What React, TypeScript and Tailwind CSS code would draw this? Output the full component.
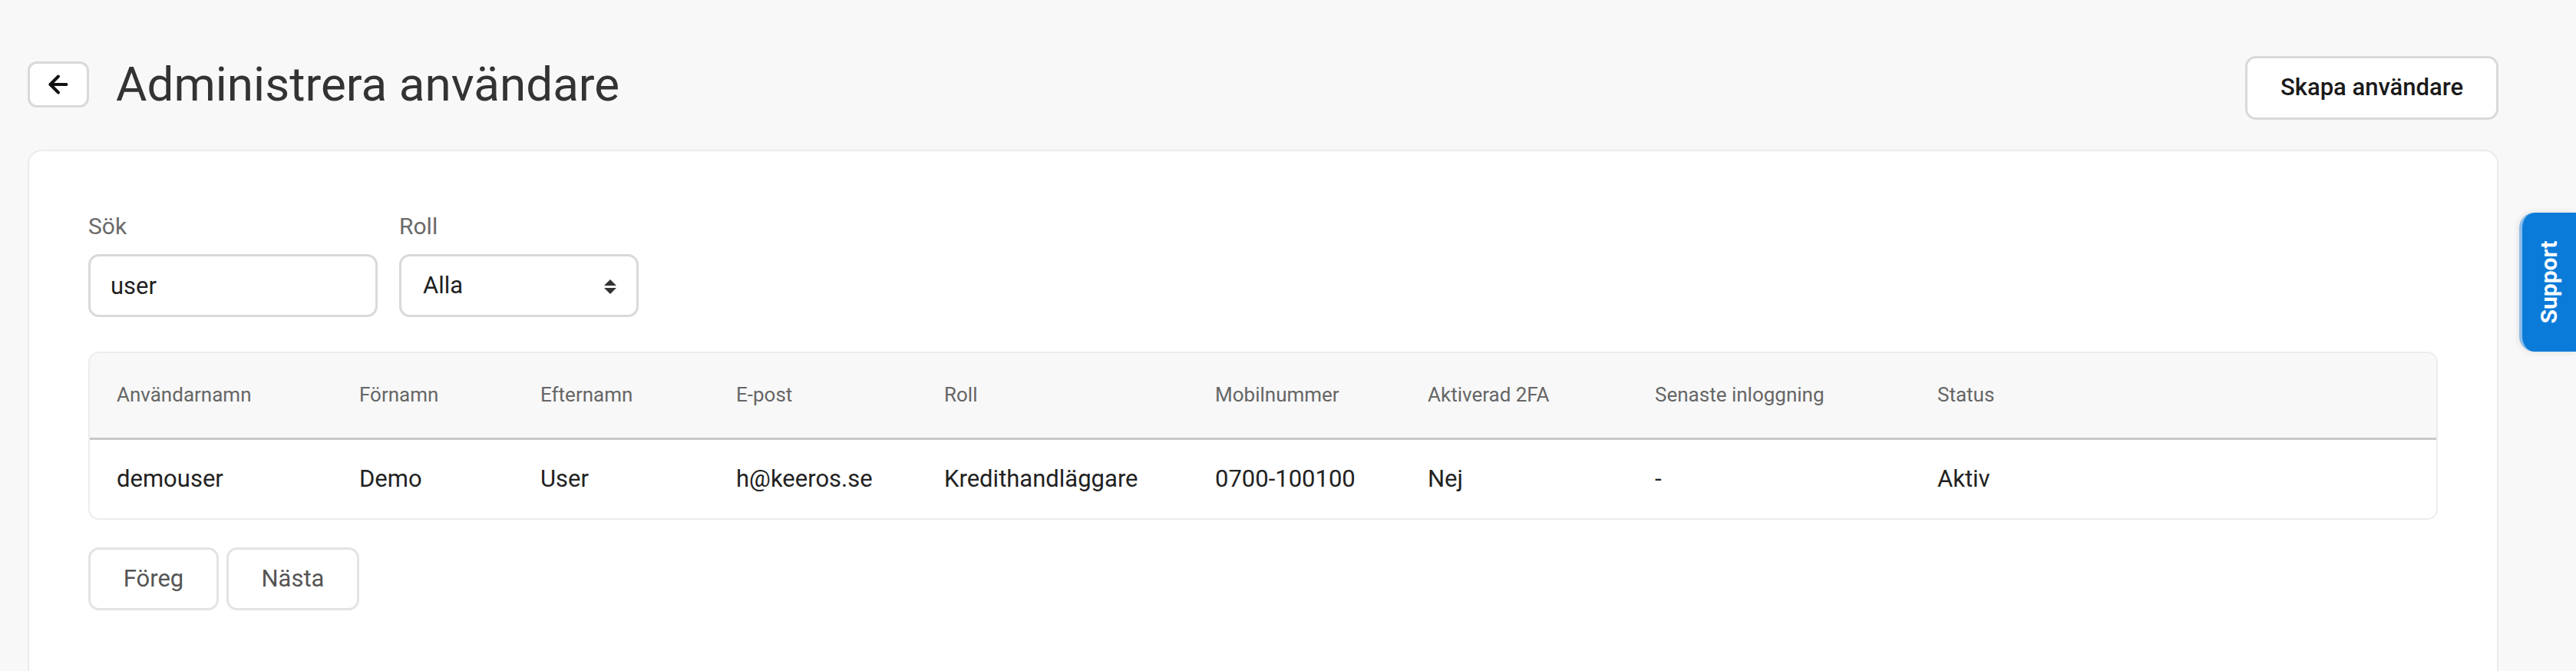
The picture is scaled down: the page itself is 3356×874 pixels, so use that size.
import React from "react";
import { ArrowLeft } from "lucide-react";

const cols = [
  { label: "Användarnamn", w: "w-[316px]" },
  { label: "Förnamn", w: "w-[236px]" },
  { label: "Efternamn", w: "w-[255px]" },
  { label: "E-post", w: "w-[271px]" },
  { label: "Roll", w: "w-[353px]" },
  { label: "Mobilnummer", w: "w-[277px]" },
  { label: "Aktiverad 2FA", w: "w-[296px]" },
  { label: "Senaste inloggning", w: "w-[368px]" },
  { label: "Status", w: "" },
];

const row = ["demouser", "Demo", "User", "h@keeros.se", "Kredithandläggare", "0700-100100", "Nej", "-", "Aktiv"];

export default function App() {
  return (
    <div className="relative min-h-screen overflow-hidden bg-[#f8f8f8] font-['Roboto',sans-serif]">
      <div className="pl-[36px] pr-[101px] pt-[73px]">
        <div className="mb-[39px] flex items-start justify-between">
          <div className="mt-[7px] flex items-center gap-[35px]">
            <button className="flex h-[60px] w-[80px] items-center justify-center rounded-[12px] border-[3px] border-[#d9d9d9] bg-white text-[#111]">
              <ArrowLeft size={36} strokeWidth={2.6} />
            </button>
            <h1 className="text-[62px] leading-[60px] font-normal text-[#333333]">Administrera användare</h1>
          </div>
          <button className="h-[83px] w-[330px] rounded-[14px] border-[3px] border-[#d9d9d9] bg-white text-[31px] font-medium text-[#1a1a1a]">
            Skapa användare
          </button>
        </div>

        <div className="rounded-[18px] border-2 border-[#ebebeb] bg-white px-[77px] pt-[78px] pb-[140px]">
          <div className="flex gap-[28px]">
            <div className="flex flex-col gap-[16px]">
              <label className="text-[30px] leading-[40px] text-[#6a6a6a]">Sök</label>
              <input
                defaultValue="user"
                className="h-[82px] w-[377px] rounded-[14px] border-[3px] border-[#d9d9d9] bg-white px-[26px] text-[31px] text-[#1f1f1f] outline-none"
              />
            </div>
            <div className="flex flex-col gap-[16px]">
              <label className="text-[30px] leading-[40px] text-[#6a6a6a]">Roll</label>
              <div className="relative">
                <select className="h-[82px] w-[312px] appearance-none rounded-[14px] border-[3px] border-[#d9d9d9] bg-white px-[28px] text-[31px] text-[#1f1f1f] outline-none">
                  <option>Alla</option>
                </select>
                <svg className="pointer-events-none absolute right-[29px] top-[22px]" width="16" height="38" viewBox="0 0 16 38">
                  <path d="M8 11 L16 19 L0 19 Z" fill="#333" />
                  <path d="M0 22 L16 22 L8 30 Z" fill="#333" />
                </svg>
              </div>
            </div>
          </div>

          <div className="mt-[45px] overflow-hidden rounded-[14px] border-2 border-[#ececec]">
            <table className="w-full table-fixed border-collapse">
              <thead>
                <tr className="h-[111px] border-b-[3px] border-[#c8c8c8] bg-[#f8f8f8]">
                  {cols.map((c) => (
                    <th key={c.label} className={`${c.w} pl-[35px] text-left text-[26px] font-normal text-[#666666]`}>
                      {c.label}
                    </th>
                  ))}
                </tr>
              </thead>
              <tbody>
                <tr className="h-[104px] bg-white">
                  {row.map((v, i) => (
                    <td key={i} className="pl-[35px] text-left text-[31px] text-[#222222]">
                      {v}
                    </td>
                  ))}
                </tr>
              </tbody>
            </table>
          </div>

          <div className="mt-[36px] flex gap-[10px]">
            <button className="h-[82px] w-[170px] rounded-[14px] border-[3px] border-[#e3e3e3] bg-white text-[31px] text-[#555555]">
              Föreg
            </button>
            <button className="h-[82px] w-[173px] rounded-[14px] border-[3px] border-[#e3e3e3] bg-white text-[31px] text-[#555555]">
              Nästa
            </button>
          </div>
        </div>
      </div>

      <div className="absolute right-0 top-[277px] flex h-[181px] w-[74px] items-center justify-center rounded-l-[20px] border-l-[4px] border-[#8cbcea] bg-[#0b7bd9] shadow-[0_0_10px_rgba(0,0,0,0.12)]">
        <span className="-rotate-90 whitespace-nowrap text-[30px] font-bold text-white">Support</span>
      </div>
    </div>
  );
}
